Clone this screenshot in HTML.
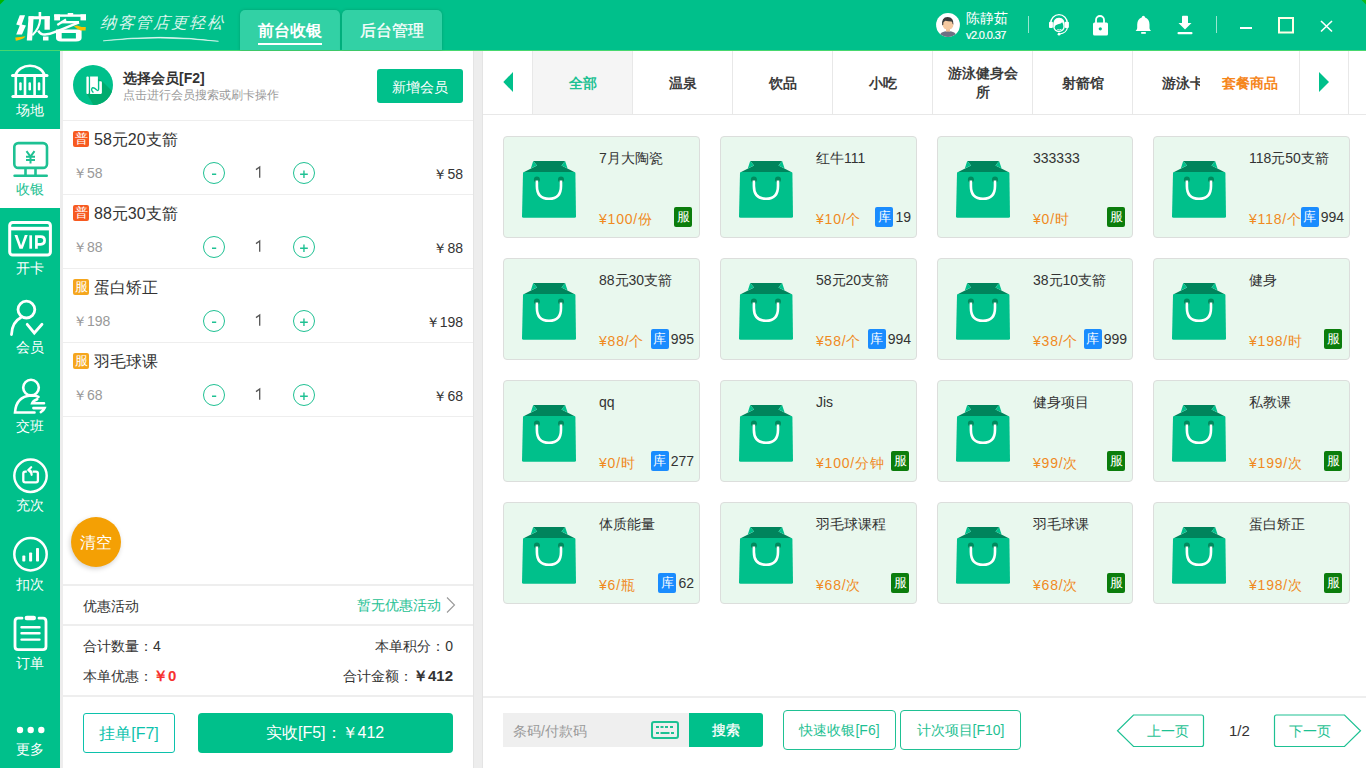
<!DOCTYPE html>
<html><head><meta charset="utf-8">
<style>
*{box-sizing:border-box;margin:0;padding:0}
html,body{width:1366px;height:768px;overflow:hidden}
body{position:relative;background:#ededed;font-family:"Liberation Sans",sans-serif;color:#333}
.a{position:absolute}
.g{background:#00c08b}
.t{white-space:nowrap;line-height:1}
/* sidebar */
.nav{position:absolute;left:0;width:60px;height:79px;text-align:center;color:#fff}
.nav svg{position:absolute;left:0;top:0}
.nav .lb{position:absolute;left:0;top:1px;width:60px;font-size:14px;line-height:14px;text-align:center}
/* items */
.row{position:absolute;left:63px;width:410px;height:74px;border-bottom:1px solid #eee;background:#fff}
.bdg{position:absolute;width:16px;height:16px;color:#fff;font-size:13px;line-height:16px;text-align:center;border-radius:2px}
.circ{position:absolute;width:22px;height:22px;border:1px solid #1fc193;border-radius:50%;color:#1fc193;font-size:12px;line-height:21px;text-align:center}
/* cards */
.card{position:absolute;width:197px;height:102px;background:#e9f8ee;border:1px solid #dcdedc;border-radius:4px}
.card svg{position:absolute;left:16px;top:22px}
.card .nm{position:absolute;left:95px;top:13px;font-size:14px;color:#333;line-height:16px;white-space:nowrap}
.card .pr{position:absolute;left:95px;top:74px;font-size:14px;color:#f08a1e;line-height:16px;white-space:nowrap;letter-spacing:0.8px}
.card .rt{position:absolute;right:5px;top:70px;height:20px;white-space:nowrap;font-size:14px;line-height:20px;color:#333}
.fu{display:inline-block;width:18px;height:20px;background:#0b7d0c;color:#fff;border-radius:2px;text-align:center;font-size:13px;line-height:20px;vertical-align:top}
.ku{display:inline-block;width:18px;height:20px;background:#1a8cfe;color:#fff;border-radius:2px;text-align:center;font-size:13px;line-height:20px;vertical-align:top;margin-right:2px}
.tab{position:absolute;top:51px;width:100px;height:63px;border-left:1px solid #e8e8e8;font-size:14px;font-weight:bold;text-align:center;color:#3c3c3c;line-height:64px;background:#fff}
.obtn{position:absolute;border:1px solid #1fc193;border-radius:4px;color:#1fc193;font-size:14px;text-align:center;background:#fff}
</style></head><body>

<!-- HEADER -->
<div class="a g" style="left:0;top:0;width:1366px;height:50px"></div>
<div class="a" style="left:0;top:50px;width:1366px;height:1px;background:#47d86f"></div>


<!-- logo -->
<svg class="a" style="left:0;top:0" width="240" height="50" viewBox="0 0 240 50">
  <g fill="#fff">
   <path d="M19.75,15.3 L25.06,15.3 L21.74,24.6 L25.95,25.5 L21.96,34.6 L16.21,34.6 L19.75,25.5 L16.21,24.6Z"/>
   <path d="M28.6,16.2 L33.7,16.2 L32.1,40.5 L26.8,40.5Z"/>
   <path d="M28.6,16.2 L49.8,16.2 L49.8,19.3 L28.6,19.3Z"/>
   <rect x="38.6" y="12" width="2.6" height="6"/>
   <rect x="44.5" y="16.2" width="5.3" height="13.5"/>
   <rect x="43" y="36.5" width="5.5" height="4"/>
  </g>
  <path d="M40.2,19 Q39.6,28.5 32.3,35.2" fill="none" stroke="#fff" stroke-width="2.1"/>
  <path d="M15.3,37.6 Q20,37 25.5,36.3 Q24,39 19,40 Q17,40.5 15.8,40.7Z" fill="#f9c000"/>
  <g fill="#fff">
   <rect x="54.2" y="14.4" width="31.8" height="2.4"/>
   <rect x="54.2" y="14.4" width="5.8" height="6"/>
   <rect x="80.5" y="14.4" width="5.5" height="6"/>
   <rect x="67.7" y="13" width="5.5" height="2"/>
   <rect x="61.3" y="21" width="17.7" height="2.4"/>
   <path d="M56,29.5 H81.6 V38 Q81.6,41.4 76,41.4 H61 Q56,41.4 56,38Z M61.7,33 V38.5 H75.9 V33Z" fill-rule="evenodd"/>
  </g>
  <path d="M57.3,25 L66,19.5" stroke="#fff" stroke-width="2.2" fill="none"/>
  <path d="M79,22.4 L55,32.1" stroke="#fff" stroke-width="2.6" fill="none"/>
  <path d="M73.9,26.2 L76.8,25.5 L81.6,27 L85.8,27 L85.6,30.4 L80.7,30.6 L76.8,28.6Z" fill="#f9c000"/>
  <path d="M38.2,30.6 Q40.5,34.8 45,34.6 Q50,34.3 56,31.7" stroke="#fff" stroke-width="2.5" fill="none"/>
  <path d="M103.2,40.8 Q160,33.5 218.5,41.3 Q160,35.2 103.2,40.8Z" fill="#fff" stroke="#fff" stroke-width="0.5"/>
</svg>
<div class="a t" style="left:100px;top:13px;font-size:16px;line-height:20px;letter-spacing:1.9px;color:#fff;font-style:italic;transform:skewX(-4deg);opacity:.85">纳客管店更轻松</div>
<!-- top tabs -->
<div class="a" style="left:240px;top:10px;width:100px;height:40px;background:#32d1a5;border-radius:5px 5px 0 0;box-shadow:0 0 3px rgba(0,90,60,.35)"></div>
<div class="a" style="left:342px;top:10px;width:100px;height:40px;background:#32d1a5;border-radius:5px 5px 0 0;box-shadow:0 0 3px rgba(0,90,60,.35)"></div>
<div class="a t" style="left:240px;top:22px;width:100px;text-align:center;font-size:16px;font-weight:bold;color:#fff;line-height:18px">前台收银</div>
<div class="a" style="left:258px;top:43px;width:64px;height:2px;background:#fff"></div>
<div class="a t" style="left:342px;top:22px;width:100px;text-align:center;font-size:16px;color:#fff;line-height:18px;-webkit-text-stroke:0.3px #fff">后台管理</div>
<!-- user -->
<svg class="a" style="left:936px;top:13px" width="24" height="24" viewBox="0 0 24 24">
  <defs><clipPath id="cc"><circle cx="12" cy="12" r="11.9"/></clipPath></defs>
  <circle cx="12" cy="12" r="11.9" fill="#fff"/>
  <g clip-path="url(#cc)">
   <path d="M2.5,25 Q3.5,18.4 12,18.1 Q20.5,18.4 21.5,25Z" fill="#6f7083"/>
   <rect x="10" y="15" width="4" height="3.6" fill="#f0bf98"/>
   <ellipse cx="12" cy="11.8" rx="5.4" ry="4.9" fill="#f5c9a0"/>
   <path d="M6.2,12.2 Q5.2,4.4 11.6,4.1 Q17.8,4.2 17.4,11.6 L16.6,11 Q16.4,8.8 15.5,8.6 Q12,8.6 9.5,7.8 Q8.2,8.6 7.4,9.6 L7.2,12Z" fill="#3b3b3b"/>
  </g>
</svg>
<div class="a t" style="left:966px;top:10px;font-size:14px;line-height:16px;color:#fff">陈静茹</div>
<div class="a t" style="left:966px;top:29px;font-size:11px;line-height:12px;color:#fff;letter-spacing:-0.6px;-webkit-text-stroke:0.2px #fff">v2.0.0.37</div>
<div class="a" style="left:1028px;top:16px;width:1px;height:17px;background:rgba(255,255,255,.6)"></div>
<div class="a" style="left:1216px;top:16px;width:1px;height:17px;background:rgba(255,255,255,.6)"></div>
<!-- header icons -->
<svg class="a" style="left:1040px;top:5px" width="326" height="40" viewBox="1040 5 326 40">
  <!-- headset -->
  <path d="M1050.6,23.5 A8.4,8.8 0 0 1 1067.4,23.5" fill="none" stroke="#fff" stroke-width="1.3"/>
  <path d="M1053.2,27 Q1052.6,17.8 1059,17.7 Q1065.4,17.8 1064.8,27 Q1064.2,31.5 1059,32.2 Q1054,31.8 1053.2,27Z" fill="#fff"/>
  <path d="M1054.6,27.2 Q1055,24.6 1058,24.2 Q1061.2,23.8 1062.2,22.2 Q1063.4,24 1063.4,26.5 Q1063.2,30.5 1059,30.9 Q1055,30.6 1054.6,27.2Z" fill="#00c08b"/>
  <path d="M1057.3,29.6 Q1059.4,30.4 1061.4,29.4" fill="none" stroke="#fff" stroke-width="0.9"/>
  <rect x="1049" y="21.8" width="3.9" height="6.3" rx="1" fill="#fff"/>
  <rect x="1064.8" y="21.8" width="4.1" height="6.3" rx="1" fill="#fff"/>
  <path d="M1067.3,28 Q1066.5,33 1059.5,34" fill="none" stroke="#fff" stroke-width="1.2"/>
  <circle cx="1059" cy="34.2" r="1.4" fill="#fff"/>
  <!-- lock -->
  <path d="M1096,23 V20 A4,4 0 0 1 1104,20 V23" fill="none" stroke="#fff" stroke-width="1.8"/>
  <rect x="1093" y="22.5" width="15" height="13" rx="1.5" fill="#fff"/>
  <circle cx="1100.3" cy="28.8" r="1.6" fill="#00c08b"/>
  <!-- bell -->
  <path d="M1143.4,15.8 Q1144.9,15.9 1145.1,17.6 Q1149.4,19.2 1149.5,24.5 V28.2 Q1149.8,29.8 1151,30.9 H1135.6 Q1136.9,29.8 1137.2,28.2 V24.5 Q1137.4,19.2 1141.7,17.6 Q1141.9,15.9 1143.4,15.8Z" fill="#fff"/>
  <rect x="1141.2" y="32" width="4.6" height="1.8" fill="#fff"/>
  <!-- download -->
  <rect x="1182" y="15.8" width="6" height="8" rx="0.8" fill="#fff"/>
  <path d="M1178.5,23 H1191.5 L1185,29.5Z" fill="#fff"/>
  <rect x="1177.5" y="32" width="15" height="2.3" rx="1" fill="#fff"/>
  <!-- minimize -->
  <rect x="1240" y="27" width="12" height="2" fill="#fff"/>
  <!-- maximize -->
  <rect x="1279" y="18" width="14" height="14.5" fill="none" stroke="#fdffe6" stroke-width="2"/>
  <!-- close -->
  <path d="M1321,21 L1332,31.5 M1332,21 L1321,31.5" stroke="#fff" stroke-width="1.6"/>
</svg>

<svg class="a" style="left:0;top:0" width="5" height="5"><path d="M0,0 H4.5 L0,4.5Z" fill="#00b400"/></svg>
<svg class="a" style="left:1361px;top:0" width="5" height="5"><path d="M0.5,0 H5 V4.5Z" fill="#12b81a"/></svg>
<!-- SIDEBAR -->
<div class="a g" style="left:0;top:51px;width:60px;height:717px"></div>
<div class="a" style="left:0;top:129px;width:60px;height:79px;background:#fff"></div>


<svg class="a" style="left:0;top:51px" width="60" height="717" viewBox="0 51 60 717">
 <g fill="none" stroke="#fff" stroke-width="2.6">
  <!-- changdi -->
  <path d="M15.5,75 A15,12.5 0 0 1 44.5,75"/>
  <path d="M15.8,76 V95 M25,76 V95 M34.6,76 V95 M43.8,76 V95"/>
 </g>
 <g fill="#fff">
  <rect x="11" y="74" width="37.5" height="3" rx="1.5"/>
  <rect x="11.4" y="95" width="36.6" height="3" rx="1.5"/>
  <rect x="19.2" y="82.3" width="2.5" height="8.2" rx="1.2"/>
  <rect x="28.5" y="82.3" width="2.5" height="8.2" rx="1.2"/>
  <rect x="37.8" y="82.3" width="2.5" height="8.2" rx="1.2"/>
 </g>
 <!-- shouyin (active) -->
 <g fill="none" stroke="#1ec193" stroke-width="2.6">
  <rect x="14.3" y="143.1" width="32.7" height="24.8" rx="4"/>
  <path d="M25.5,168 V175 M35.5,168 V175"/>
  <path d="M14.6,175.8 H46.7" stroke-linecap="round"/>
 </g>
 <g fill="none" stroke="#1ec193" stroke-width="2">
  <path d="M26.5,151.2 L30.5,156.5 L34.5,151.2 M26,156.8 H35 M26,160 H35 M30.5,156.5 V163.5"/>
 </g>
 <!-- VIP -->
 <g fill="none" stroke="#fff" stroke-width="3">
  <rect x="9.7" y="222.5" width="40.7" height="32.5" rx="3"/>
 </g>
 <rect x="11" y="226.8" width="38" height="3.6" fill="#fff"/>
 <g fill="none" stroke="#fff" stroke-width="2.7">
  <path d="M14.5,235 H17.4 L21.1,245.4 L24.8,235 H27.7 L22.7,248.7 H19.5Z" fill="#fff" stroke="none"/>
  <path d="M30.7,235.3 V248.7"/>
  <path d="M36.4,248.7 V236.6 H40.8 Q44.6,236.6 44.6,240.5 Q44.6,244.3 40.8,244.3 H36.4"/>
 </g>
 <!-- huiyuan -->
 <g fill="none" stroke="#fff" stroke-width="2.8" stroke-linecap="round">
  <circle cx="26.4" cy="309.6" r="8.4"/>
  <path d="M21,317.5 Q12,322 11.5,334.5"/>
  <path d="M27.2,324.3 L34.3,333 L42,324.3"/>
 </g>
 <!-- jiaoban -->
 <g fill="none" stroke="#fff" stroke-width="2.6" stroke-linecap="round">
  <circle cx="31" cy="387.6" r="7.8"/>
  <path d="M38.5,396.8 Q36,395.5 31,395.5 Q16,396.5 15,412.5 H34.5"/>
  <path d="M37.2,399.2 Q33,400.8 32.2,403.2 H44"/>
  <path d="M33.4,408.1 H44.6 Q43.5,410.8 40.8,412.2"/>
 </g>
 <!-- chongci -->
 <g fill="none" stroke="#fff" stroke-width="2.5">
  <circle cx="30.5" cy="475.8" r="16.2"/>
  <path d="M26.8,471.6 H25.2 Q23.3,471.6 23.3,473.5 V480.4 Q23.3,482.3 25.2,482.3 H36 Q37.9,482.3 37.9,480.4 V473.5 Q37.9,471.6 36,471.6 H32.6" stroke-width="2.3"/>
  <path d="M31.2,467.2 L28.3,470 L31.2,472.8" stroke-width="2.2" stroke-linecap="round" stroke-linejoin="round"/>
  <path d="M28.8,470 Q31.5,470.2 31.6,474.8" stroke-width="2.2" stroke-linecap="round"/>
 </g>
 <!-- kouci -->
 <circle cx="30.5" cy="554.2" r="16.2" fill="none" stroke="#fff" stroke-width="2.5"/>
 <g fill="#fff">
  <rect x="22.3" y="555.6" width="3" height="6" rx="0.8"/>
  <rect x="29.1" y="552.4" width="3" height="9.2" rx="0.8"/>
  <rect x="36" y="547.9" width="3" height="13.7" rx="0.8"/>
 </g>
 <!-- dingdan -->
 <g fill="none" stroke="#fff" stroke-width="2.8" stroke-linecap="round">
  <path d="M22,618.2 H18 Q15,618.2 15,621.5 V646.5 Q15,649.6 18,649.6 H43 Q46,649.6 46,646.5 V621.5 Q46,618.2 43,618.2 H39"/>
  <path d="M21.5,627.2 H39.5 M21.5,633.3 H39.5 M21.5,639.6 H39.5" stroke-width="2.4"/>
 </g>
 <rect x="24.6" y="615.8" width="11.4" height="4.4" rx="2.2" fill="#fff"/>
 <!-- more -->
 <circle cx="20" cy="730" r="3.2" fill="#fff"/>
 <circle cx="30.7" cy="730" r="3.2" fill="#fff"/>
 <circle cx="41.3" cy="730" r="3.2" fill="#fff"/>
</svg>
<div class="nav" style="top:102px"><div class="lb">场地</div></div>
<div class="nav" style="top:181px;color:#1ec193"><div class="lb">收银</div></div>
<div class="nav" style="top:260px"><div class="lb">开卡</div></div>
<div class="nav" style="top:339px"><div class="lb">会员</div></div>
<div class="nav" style="top:418px"><div class="lb">交班</div></div>
<div class="nav" style="top:497px"><div class="lb">充次</div></div>
<div class="nav" style="top:576px"><div class="lb">扣次</div></div>
<div class="nav" style="top:655px"><div class="lb">订单</div></div>
<div class="nav" style="top:741px"><div class="lb">更多</div></div>

<!-- LEFT PANEL -->
<div class="a" style="left:63px;top:51px;width:410px;height:717px;background:#fff"></div>


<!-- member -->
<svg class="a" style="left:73px;top:65px" width="40" height="40" viewBox="73 65 40 40">
 <defs><clipPath id="mc"><circle cx="93" cy="85" r="20"/></clipPath></defs>
 <circle cx="93" cy="85" r="20" fill="#00c08b"/>
 <path d="M97.9,79 L102,81 L125,104 L105,125 L87,94Z" fill="#00ac6e" clip-path="url(#mc)"/>
 <rect x="86.4" y="76.4" width="2.4" height="17.5" rx="1" fill="#fff"/>
 <path d="M90.1,76.4 H97.9 V81.2 H100.8 Q101.9,81.2 101.9,82.5 V92.8 Q101.9,93.9 100.8,93.9 H90.1Z" fill="#fff"/>
 <path d="M98.6,81 V89.3 Q98.4,91.2 96.8,90 L94.8,88.4 Q92.2,86.6 91.6,89.4 Q91.5,91.2 93.4,92.6" fill="none" stroke="#00c08b" stroke-width="1.4"/>
</svg>
<div class="a t" style="left:123px;top:70px;font-size:14px;font-weight:bold;color:#333;line-height:16px">选择会员[F2]</div>
<div class="a t" style="left:123px;top:88px;font-size:12px;color:#999;line-height:14px">点击进行会员搜索或刷卡操作</div>
<div class="a" style="left:377px;top:69px;width:86px;height:34px;background:#00c08b;border-radius:3px;color:#fff;font-size:14px;line-height:36px;text-align:center">新增会员</div>
<div class="a" style="left:63px;top:120px;width:410px;height:1px;background:#eee"></div>
<div class="bdg" style="left:73px;top:131px;background:#f75a20">普</div>
<div class="a t" style="left:94px;top:131px;font-size:16px;line-height:17px;color:#333">58元20支箭</div>
<div class="a t" style="left:73px;top:165px;font-size:14px;line-height:16px;color:#999">￥58</div>
<div class="circ" style="left:203px;top:162px"></div>

<div class="circ" style="left:293px;top:162px"></div>
<svg class="a" style="left:200px;top:161px" width="120" height="26" viewBox="200 161 120 26"><path d="M212,174.3 H216.2 M300.1,174.3 H307.8 M303.95,170.5 V178.1" stroke="#1fc193" stroke-width="1.4" fill="none"/><path d="M256,169.6 L259.7,167.0 V177.7" stroke="#555" stroke-width="1.3" fill="none"/></svg>
<div class="a t" style="left:363px;top:166px;width:100px;text-align:right;font-size:14px;line-height:16px;color:#333">￥58</div>
<div class="a" style="left:63px;top:194px;width:410px;height:1px;background:#eee"></div>
<div class="bdg" style="left:73px;top:205px;background:#f75a20">普</div>
<div class="a t" style="left:94px;top:205px;font-size:16px;line-height:17px;color:#333">88元30支箭</div>
<div class="a t" style="left:73px;top:239px;font-size:14px;line-height:16px;color:#999">￥88</div>
<div class="circ" style="left:203px;top:236px"></div>

<div class="circ" style="left:293px;top:236px"></div>
<svg class="a" style="left:200px;top:235px" width="120" height="26" viewBox="200 235 120 26"><path d="M212,248.3 H216.2 M300.1,248.3 H307.8 M303.95,244.5 V252.1" stroke="#1fc193" stroke-width="1.4" fill="none"/><path d="M256,243.6 L259.7,241.0 V251.7" stroke="#555" stroke-width="1.3" fill="none"/></svg>
<div class="a t" style="left:363px;top:240px;width:100px;text-align:right;font-size:14px;line-height:16px;color:#333">￥88</div>
<div class="a" style="left:63px;top:268px;width:410px;height:1px;background:#eee"></div>
<div class="bdg" style="left:73px;top:279px;background:#f5a61e">服</div>
<div class="a t" style="left:94px;top:279px;font-size:16px;line-height:17px;color:#333">蛋白矫正</div>
<div class="a t" style="left:73px;top:313px;font-size:14px;line-height:16px;color:#999">￥198</div>
<div class="circ" style="left:203px;top:310px"></div>

<div class="circ" style="left:293px;top:310px"></div>
<svg class="a" style="left:200px;top:309px" width="120" height="26" viewBox="200 309 120 26"><path d="M212,322.3 H216.2 M300.1,322.3 H307.8 M303.95,318.5 V326.1" stroke="#1fc193" stroke-width="1.4" fill="none"/><path d="M256,317.6 L259.7,315.0 V325.7" stroke="#555" stroke-width="1.3" fill="none"/></svg>
<div class="a t" style="left:363px;top:314px;width:100px;text-align:right;font-size:14px;line-height:16px;color:#333">￥198</div>
<div class="a" style="left:63px;top:342px;width:410px;height:1px;background:#eee"></div>
<div class="bdg" style="left:73px;top:353px;background:#f5a61e">服</div>
<div class="a t" style="left:94px;top:353px;font-size:16px;line-height:17px;color:#333">羽毛球课</div>
<div class="a t" style="left:73px;top:387px;font-size:14px;line-height:16px;color:#999">￥68</div>
<div class="circ" style="left:203px;top:384px"></div>

<div class="circ" style="left:293px;top:384px"></div>
<svg class="a" style="left:200px;top:383px" width="120" height="26" viewBox="200 383 120 26"><path d="M212,396.3 H216.2 M300.1,396.3 H307.8 M303.95,392.5 V400.1" stroke="#1fc193" stroke-width="1.4" fill="none"/><path d="M256,391.6 L259.7,389.0 V399.7" stroke="#555" stroke-width="1.3" fill="none"/></svg>
<div class="a t" style="left:363px;top:388px;width:100px;text-align:right;font-size:14px;line-height:16px;color:#333">￥68</div>
<div class="a" style="left:63px;top:416px;width:410px;height:1px;background:#eee"></div>

<!-- clear -->
<div class="a" style="left:71px;top:517px;width:50px;height:50px;border-radius:50%;background:#f4a004;box-shadow:-1px 2px 5px rgba(0,0,0,.18);color:#fff;font-size:16px;line-height:52px;text-align:center">清空</div>
<div class="a" style="left:63px;top:584px;width:410px;height:2px;background:#eee"></div>
<div class="a t" style="left:83px;top:598px;font-size:14px;line-height:16px;color:#333">优惠活动</div>
<div class="a t" style="left:357px;top:598px;font-size:14px;line-height:15px;color:#1ec193">暂无优惠活动</div>
<svg class="a" style="left:445px;top:596px" width="12" height="18" viewBox="0 0 12 18"><path d="M2,1.5 L9.5,9 L2,16.5" fill="none" stroke="#999" stroke-width="1.1"/></svg>
<div class="a" style="left:63px;top:624px;width:410px;height:2px;background:#eee"></div>
<div class="a t" style="left:83px;top:638px;font-size:14px;line-height:16px;color:#333">合计数量：4</div>
<div class="a t" style="left:253px;top:638px;width:200px;text-align:right;font-size:14px;line-height:16px;color:#333">本单积分：0</div>
<div class="a t" style="left:83px;top:668px;font-size:14px;line-height:16px;color:#333">本单优惠：<b style="color:#f7322f;font-size:15px">￥0</b></div>
<div class="a t" style="left:253px;top:668px;width:200px;text-align:right;font-size:14px;line-height:16px;color:#333">合计金额：<b style="font-size:15px;color:#333">￥412</b></div>
<div class="a" style="left:63px;top:695px;width:410px;height:2px;background:#eee"></div>
<div class="a" style="left:83px;top:713px;width:92px;height:40px;border:1px solid #0cc2ac;border-radius:3px;color:#0cc2ac;font-size:16px;line-height:40px;text-align:center">挂单[F7]</div>
<div class="a" style="left:198px;top:713px;width:255px;height:40px;background:#00c08b;border-radius:4px;color:#fff;font-size:16px;line-height:40px;padding-left:68px;white-space:nowrap">实收[F5]：￥412</div>

<div class="a" style="left:473px;top:51px;width:1px;height:717px;background:#e4e4e4"></div>
<div class="a" style="left:482px;top:51px;width:1px;height:717px;background:#e4e4e4"></div>
<!-- RIGHT PANEL -->
<div class="a" style="left:483px;top:51px;width:883px;height:717px;background:#fff"></div>


<!-- tabs -->
<svg class="a" style="left:503px;top:72px" width="11" height="20" viewBox="0 0 11 20"><path d="M10,0 V20 L0.3,10Z" fill="#00c08b"/></svg>
<div class="tab" style="left:532px;background:#f5f5f5;color:#1ec193">全部</div>
<div class="tab" style="left:632px">温泉</div>
<div class="tab" style="left:732px">饮品</div>
<div class="tab" style="left:832px">小吃</div>
<div class="tab" style="left:932px;line-height:19px;padding-top:13px">游泳健身会<br>所</div>
<div class="tab" style="left:1032px">射箭馆</div>
<div class="a" style="left:1132px;top:51px;width:68px;height:63px;overflow:hidden"><div class="tab" style="left:0;top:0">游泳卡</div></div>
<div class="a t" style="left:1200px;top:75px;width:100px;text-align:center;font-size:14px;font-weight:bold;color:#f5861c;line-height:16px">套餐商品</div>
<div class="a" style="left:1299px;top:51px;width:1px;height:63px;background:#e8e8e8"></div>
<svg class="a" style="left:1318px;top:72px" width="12" height="20" viewBox="0 0 12 20"><path d="M1,0 V20 L11,10Z" fill="#00c08b"/></svg>
<div class="a" style="left:1348px;top:51px;width:1px;height:63px;background:#e8e8e8"></div>
<div class="a" style="left:483px;top:114px;width:883px;height:1px;background:#e8e8e8"></div>
<div class="card" style="left:503px;top:136px"><svg width="56" height="60" viewBox="5 4 56 60"><path d="M9.1,16.9 H59.3 Q60.3,16.9 60.4,18 L61,61.2 Q61,62.7 59.5,62.7 H8.5 Q7,62.7 7,61.2 L8,18 Q8.1,16.9 9.1,16.9Z" fill="#00c08b"/><path d="M18.2,5.9 H50.1 L46.5,10.5 L59.3,16.9 H9.1 L22,10.5Z" fill="#00845c"/><path d="M18.2,5.9 L22,10.5 L15.8,13.6Z M50.1,5.9 L46.5,10.5 L52.6,13.6Z" fill="#00c08b"/><circle cx="21.9" cy="24.6" r="3" fill="#008a5e"/><circle cx="46" cy="24.6" r="3" fill="#008a5e"/><path d="M21.9,25.5 V31 Q21.9,43.8 34,43.8 Q46,43.8 46,31 V25.5" fill="none" stroke="#fff" stroke-width="2.6"/></svg><div class="nm">7月大陶瓷</div><div class="pr">¥100/份</div><div class="rt" style="right:7px"><span class="fu">服</span></div></div>
<div class="card" style="left:720px;top:136px"><svg width="56" height="60" viewBox="5 4 56 60"><path d="M9.1,16.9 H59.3 Q60.3,16.9 60.4,18 L61,61.2 Q61,62.7 59.5,62.7 H8.5 Q7,62.7 7,61.2 L8,18 Q8.1,16.9 9.1,16.9Z" fill="#00c08b"/><path d="M18.2,5.9 H50.1 L46.5,10.5 L59.3,16.9 H9.1 L22,10.5Z" fill="#00845c"/><path d="M18.2,5.9 L22,10.5 L15.8,13.6Z M50.1,5.9 L46.5,10.5 L52.6,13.6Z" fill="#00c08b"/><circle cx="21.9" cy="24.6" r="3" fill="#008a5e"/><circle cx="46" cy="24.6" r="3" fill="#008a5e"/><path d="M21.9,25.5 V31 Q21.9,43.8 34,43.8 Q46,43.8 46,31 V25.5" fill="none" stroke="#fff" stroke-width="2.6"/></svg><div class="nm">红牛111</div><div class="pr">¥10/个</div><div class="rt"><span class="ku">库</span>19</div></div>
<div class="card" style="left:937px;top:136px;width:196px"><svg width="56" height="60" viewBox="5 4 56 60"><path d="M9.1,16.9 H59.3 Q60.3,16.9 60.4,18 L61,61.2 Q61,62.7 59.5,62.7 H8.5 Q7,62.7 7,61.2 L8,18 Q8.1,16.9 9.1,16.9Z" fill="#00c08b"/><path d="M18.2,5.9 H50.1 L46.5,10.5 L59.3,16.9 H9.1 L22,10.5Z" fill="#00845c"/><path d="M18.2,5.9 L22,10.5 L15.8,13.6Z M50.1,5.9 L46.5,10.5 L52.6,13.6Z" fill="#00c08b"/><circle cx="21.9" cy="24.6" r="3" fill="#008a5e"/><circle cx="46" cy="24.6" r="3" fill="#008a5e"/><path d="M21.9,25.5 V31 Q21.9,43.8 34,43.8 Q46,43.8 46,31 V25.5" fill="none" stroke="#fff" stroke-width="2.6"/></svg><div class="nm">333333</div><div class="pr">¥0/时</div><div class="rt" style="right:7px"><span class="fu">服</span></div></div>
<div class="card" style="left:1153px;top:136px"><svg width="56" height="60" viewBox="5 4 56 60"><path d="M9.1,16.9 H59.3 Q60.3,16.9 60.4,18 L61,61.2 Q61,62.7 59.5,62.7 H8.5 Q7,62.7 7,61.2 L8,18 Q8.1,16.9 9.1,16.9Z" fill="#00c08b"/><path d="M18.2,5.9 H50.1 L46.5,10.5 L59.3,16.9 H9.1 L22,10.5Z" fill="#00845c"/><path d="M18.2,5.9 L22,10.5 L15.8,13.6Z M50.1,5.9 L46.5,10.5 L52.6,13.6Z" fill="#00c08b"/><circle cx="21.9" cy="24.6" r="3" fill="#008a5e"/><circle cx="46" cy="24.6" r="3" fill="#008a5e"/><path d="M21.9,25.5 V31 Q21.9,43.8 34,43.8 Q46,43.8 46,31 V25.5" fill="none" stroke="#fff" stroke-width="2.6"/></svg><div class="nm">118元50支箭</div><div class="pr">¥118/个</div><div class="rt"><span class="ku">库</span>994</div></div>
<div class="card" style="left:503px;top:258px"><svg width="56" height="60" viewBox="5 4 56 60"><path d="M9.1,16.9 H59.3 Q60.3,16.9 60.4,18 L61,61.2 Q61,62.7 59.5,62.7 H8.5 Q7,62.7 7,61.2 L8,18 Q8.1,16.9 9.1,16.9Z" fill="#00c08b"/><path d="M18.2,5.9 H50.1 L46.5,10.5 L59.3,16.9 H9.1 L22,10.5Z" fill="#00845c"/><path d="M18.2,5.9 L22,10.5 L15.8,13.6Z M50.1,5.9 L46.5,10.5 L52.6,13.6Z" fill="#00c08b"/><circle cx="21.9" cy="24.6" r="3" fill="#008a5e"/><circle cx="46" cy="24.6" r="3" fill="#008a5e"/><path d="M21.9,25.5 V31 Q21.9,43.8 34,43.8 Q46,43.8 46,31 V25.5" fill="none" stroke="#fff" stroke-width="2.6"/></svg><div class="nm">88元30支箭</div><div class="pr">¥88/个</div><div class="rt"><span class="ku">库</span>995</div></div>
<div class="card" style="left:720px;top:258px"><svg width="56" height="60" viewBox="5 4 56 60"><path d="M9.1,16.9 H59.3 Q60.3,16.9 60.4,18 L61,61.2 Q61,62.7 59.5,62.7 H8.5 Q7,62.7 7,61.2 L8,18 Q8.1,16.9 9.1,16.9Z" fill="#00c08b"/><path d="M18.2,5.9 H50.1 L46.5,10.5 L59.3,16.9 H9.1 L22,10.5Z" fill="#00845c"/><path d="M18.2,5.9 L22,10.5 L15.8,13.6Z M50.1,5.9 L46.5,10.5 L52.6,13.6Z" fill="#00c08b"/><circle cx="21.9" cy="24.6" r="3" fill="#008a5e"/><circle cx="46" cy="24.6" r="3" fill="#008a5e"/><path d="M21.9,25.5 V31 Q21.9,43.8 34,43.8 Q46,43.8 46,31 V25.5" fill="none" stroke="#fff" stroke-width="2.6"/></svg><div class="nm">58元20支箭</div><div class="pr">¥58/个</div><div class="rt"><span class="ku">库</span>994</div></div>
<div class="card" style="left:937px;top:258px;width:196px"><svg width="56" height="60" viewBox="5 4 56 60"><path d="M9.1,16.9 H59.3 Q60.3,16.9 60.4,18 L61,61.2 Q61,62.7 59.5,62.7 H8.5 Q7,62.7 7,61.2 L8,18 Q8.1,16.9 9.1,16.9Z" fill="#00c08b"/><path d="M18.2,5.9 H50.1 L46.5,10.5 L59.3,16.9 H9.1 L22,10.5Z" fill="#00845c"/><path d="M18.2,5.9 L22,10.5 L15.8,13.6Z M50.1,5.9 L46.5,10.5 L52.6,13.6Z" fill="#00c08b"/><circle cx="21.9" cy="24.6" r="3" fill="#008a5e"/><circle cx="46" cy="24.6" r="3" fill="#008a5e"/><path d="M21.9,25.5 V31 Q21.9,43.8 34,43.8 Q46,43.8 46,31 V25.5" fill="none" stroke="#fff" stroke-width="2.6"/></svg><div class="nm">38元10支箭</div><div class="pr">¥38/个</div><div class="rt"><span class="ku">库</span>999</div></div>
<div class="card" style="left:1153px;top:258px"><svg width="56" height="60" viewBox="5 4 56 60"><path d="M9.1,16.9 H59.3 Q60.3,16.9 60.4,18 L61,61.2 Q61,62.7 59.5,62.7 H8.5 Q7,62.7 7,61.2 L8,18 Q8.1,16.9 9.1,16.9Z" fill="#00c08b"/><path d="M18.2,5.9 H50.1 L46.5,10.5 L59.3,16.9 H9.1 L22,10.5Z" fill="#00845c"/><path d="M18.2,5.9 L22,10.5 L15.8,13.6Z M50.1,5.9 L46.5,10.5 L52.6,13.6Z" fill="#00c08b"/><circle cx="21.9" cy="24.6" r="3" fill="#008a5e"/><circle cx="46" cy="24.6" r="3" fill="#008a5e"/><path d="M21.9,25.5 V31 Q21.9,43.8 34,43.8 Q46,43.8 46,31 V25.5" fill="none" stroke="#fff" stroke-width="2.6"/></svg><div class="nm">健身</div><div class="pr">¥198/时</div><div class="rt" style="right:7px"><span class="fu">服</span></div></div>
<div class="card" style="left:503px;top:380px"><svg width="56" height="60" viewBox="5 4 56 60"><path d="M9.1,16.9 H59.3 Q60.3,16.9 60.4,18 L61,61.2 Q61,62.7 59.5,62.7 H8.5 Q7,62.7 7,61.2 L8,18 Q8.1,16.9 9.1,16.9Z" fill="#00c08b"/><path d="M18.2,5.9 H50.1 L46.5,10.5 L59.3,16.9 H9.1 L22,10.5Z" fill="#00845c"/><path d="M18.2,5.9 L22,10.5 L15.8,13.6Z M50.1,5.9 L46.5,10.5 L52.6,13.6Z" fill="#00c08b"/><circle cx="21.9" cy="24.6" r="3" fill="#008a5e"/><circle cx="46" cy="24.6" r="3" fill="#008a5e"/><path d="M21.9,25.5 V31 Q21.9,43.8 34,43.8 Q46,43.8 46,31 V25.5" fill="none" stroke="#fff" stroke-width="2.6"/></svg><div class="nm">qq</div><div class="pr">¥0/时</div><div class="rt"><span class="ku">库</span>277</div></div>
<div class="card" style="left:720px;top:380px"><svg width="56" height="60" viewBox="5 4 56 60"><path d="M9.1,16.9 H59.3 Q60.3,16.9 60.4,18 L61,61.2 Q61,62.7 59.5,62.7 H8.5 Q7,62.7 7,61.2 L8,18 Q8.1,16.9 9.1,16.9Z" fill="#00c08b"/><path d="M18.2,5.9 H50.1 L46.5,10.5 L59.3,16.9 H9.1 L22,10.5Z" fill="#00845c"/><path d="M18.2,5.9 L22,10.5 L15.8,13.6Z M50.1,5.9 L46.5,10.5 L52.6,13.6Z" fill="#00c08b"/><circle cx="21.9" cy="24.6" r="3" fill="#008a5e"/><circle cx="46" cy="24.6" r="3" fill="#008a5e"/><path d="M21.9,25.5 V31 Q21.9,43.8 34,43.8 Q46,43.8 46,31 V25.5" fill="none" stroke="#fff" stroke-width="2.6"/></svg><div class="nm">Jis</div><div class="pr">¥100/分钟</div><div class="rt" style="right:7px"><span class="fu">服</span></div></div>
<div class="card" style="left:937px;top:380px;width:196px"><svg width="56" height="60" viewBox="5 4 56 60"><path d="M9.1,16.9 H59.3 Q60.3,16.9 60.4,18 L61,61.2 Q61,62.7 59.5,62.7 H8.5 Q7,62.7 7,61.2 L8,18 Q8.1,16.9 9.1,16.9Z" fill="#00c08b"/><path d="M18.2,5.9 H50.1 L46.5,10.5 L59.3,16.9 H9.1 L22,10.5Z" fill="#00845c"/><path d="M18.2,5.9 L22,10.5 L15.8,13.6Z M50.1,5.9 L46.5,10.5 L52.6,13.6Z" fill="#00c08b"/><circle cx="21.9" cy="24.6" r="3" fill="#008a5e"/><circle cx="46" cy="24.6" r="3" fill="#008a5e"/><path d="M21.9,25.5 V31 Q21.9,43.8 34,43.8 Q46,43.8 46,31 V25.5" fill="none" stroke="#fff" stroke-width="2.6"/></svg><div class="nm">健身项目</div><div class="pr">¥99/次</div><div class="rt" style="right:7px"><span class="fu">服</span></div></div>
<div class="card" style="left:1153px;top:380px"><svg width="56" height="60" viewBox="5 4 56 60"><path d="M9.1,16.9 H59.3 Q60.3,16.9 60.4,18 L61,61.2 Q61,62.7 59.5,62.7 H8.5 Q7,62.7 7,61.2 L8,18 Q8.1,16.9 9.1,16.9Z" fill="#00c08b"/><path d="M18.2,5.9 H50.1 L46.5,10.5 L59.3,16.9 H9.1 L22,10.5Z" fill="#00845c"/><path d="M18.2,5.9 L22,10.5 L15.8,13.6Z M50.1,5.9 L46.5,10.5 L52.6,13.6Z" fill="#00c08b"/><circle cx="21.9" cy="24.6" r="3" fill="#008a5e"/><circle cx="46" cy="24.6" r="3" fill="#008a5e"/><path d="M21.9,25.5 V31 Q21.9,43.8 34,43.8 Q46,43.8 46,31 V25.5" fill="none" stroke="#fff" stroke-width="2.6"/></svg><div class="nm">私教课</div><div class="pr">¥199/次</div><div class="rt" style="right:7px"><span class="fu">服</span></div></div>
<div class="card" style="left:503px;top:502px"><svg width="56" height="60" viewBox="5 4 56 60"><path d="M9.1,16.9 H59.3 Q60.3,16.9 60.4,18 L61,61.2 Q61,62.7 59.5,62.7 H8.5 Q7,62.7 7,61.2 L8,18 Q8.1,16.9 9.1,16.9Z" fill="#00c08b"/><path d="M18.2,5.9 H50.1 L46.5,10.5 L59.3,16.9 H9.1 L22,10.5Z" fill="#00845c"/><path d="M18.2,5.9 L22,10.5 L15.8,13.6Z M50.1,5.9 L46.5,10.5 L52.6,13.6Z" fill="#00c08b"/><circle cx="21.9" cy="24.6" r="3" fill="#008a5e"/><circle cx="46" cy="24.6" r="3" fill="#008a5e"/><path d="M21.9,25.5 V31 Q21.9,43.8 34,43.8 Q46,43.8 46,31 V25.5" fill="none" stroke="#fff" stroke-width="2.6"/></svg><div class="nm">体质能量</div><div class="pr">¥6/瓶</div><div class="rt"><span class="ku">库</span>62</div></div>
<div class="card" style="left:720px;top:502px"><svg width="56" height="60" viewBox="5 4 56 60"><path d="M9.1,16.9 H59.3 Q60.3,16.9 60.4,18 L61,61.2 Q61,62.7 59.5,62.7 H8.5 Q7,62.7 7,61.2 L8,18 Q8.1,16.9 9.1,16.9Z" fill="#00c08b"/><path d="M18.2,5.9 H50.1 L46.5,10.5 L59.3,16.9 H9.1 L22,10.5Z" fill="#00845c"/><path d="M18.2,5.9 L22,10.5 L15.8,13.6Z M50.1,5.9 L46.5,10.5 L52.6,13.6Z" fill="#00c08b"/><circle cx="21.9" cy="24.6" r="3" fill="#008a5e"/><circle cx="46" cy="24.6" r="3" fill="#008a5e"/><path d="M21.9,25.5 V31 Q21.9,43.8 34,43.8 Q46,43.8 46,31 V25.5" fill="none" stroke="#fff" stroke-width="2.6"/></svg><div class="nm">羽毛球课程</div><div class="pr">¥68/次</div><div class="rt" style="right:7px"><span class="fu">服</span></div></div>
<div class="card" style="left:937px;top:502px;width:196px"><svg width="56" height="60" viewBox="5 4 56 60"><path d="M9.1,16.9 H59.3 Q60.3,16.9 60.4,18 L61,61.2 Q61,62.7 59.5,62.7 H8.5 Q7,62.7 7,61.2 L8,18 Q8.1,16.9 9.1,16.9Z" fill="#00c08b"/><path d="M18.2,5.9 H50.1 L46.5,10.5 L59.3,16.9 H9.1 L22,10.5Z" fill="#00845c"/><path d="M18.2,5.9 L22,10.5 L15.8,13.6Z M50.1,5.9 L46.5,10.5 L52.6,13.6Z" fill="#00c08b"/><circle cx="21.9" cy="24.6" r="3" fill="#008a5e"/><circle cx="46" cy="24.6" r="3" fill="#008a5e"/><path d="M21.9,25.5 V31 Q21.9,43.8 34,43.8 Q46,43.8 46,31 V25.5" fill="none" stroke="#fff" stroke-width="2.6"/></svg><div class="nm">羽毛球课</div><div class="pr">¥68/次</div><div class="rt" style="right:7px"><span class="fu">服</span></div></div>
<div class="card" style="left:1153px;top:502px"><svg width="56" height="60" viewBox="5 4 56 60"><path d="M9.1,16.9 H59.3 Q60.3,16.9 60.4,18 L61,61.2 Q61,62.7 59.5,62.7 H8.5 Q7,62.7 7,61.2 L8,18 Q8.1,16.9 9.1,16.9Z" fill="#00c08b"/><path d="M18.2,5.9 H50.1 L46.5,10.5 L59.3,16.9 H9.1 L22,10.5Z" fill="#00845c"/><path d="M18.2,5.9 L22,10.5 L15.8,13.6Z M50.1,5.9 L46.5,10.5 L52.6,13.6Z" fill="#00c08b"/><circle cx="21.9" cy="24.6" r="3" fill="#008a5e"/><circle cx="46" cy="24.6" r="3" fill="#008a5e"/><path d="M21.9,25.5 V31 Q21.9,43.8 34,43.8 Q46,43.8 46,31 V25.5" fill="none" stroke="#fff" stroke-width="2.6"/></svg><div class="nm">蛋白矫正</div><div class="pr">¥198/次</div><div class="rt" style="right:7px"><span class="fu">服</span></div></div>

<!-- bottom bar -->
<div class="a" style="left:483px;top:696px;width:883px;height:2px;background:#eee"></div>
<div class="a" style="left:503px;top:713px;width:186px;height:34px;background:#efefef"></div>
<div class="a t" style="left:513px;top:723px;font-size:14px;line-height:16px;color:#999">条码/付款码</div>
<svg class="a" style="left:651px;top:721px" width="28" height="18" viewBox="0 0 28 18">
 <rect x="1" y="1" width="26" height="16" rx="2" fill="none" stroke="#1ec193" stroke-width="2"/>
 <g fill="#1ec193"><rect x="5" y="5" width="3" height="2"/><rect x="9.5" y="5" width="3" height="2"/><rect x="14" y="5" width="3" height="2"/><rect x="19" y="5" width="3" height="2"/><rect x="5" y="11" width="3" height="2"/><rect x="9.5" y="11" width="9" height="2"/><rect x="20" y="11" width="3" height="2"/></g>
</svg>
<div class="a" style="left:689px;top:713px;width:74px;height:34px;background:#00c08b;border-radius:0 3px 3px 0;color:#fff;font-size:14px;line-height:34px;text-align:center;-webkit-text-stroke:0.3px #fff">搜索</div>
<div class="obtn" style="left:783px;top:710px;width:113px;height:40px;line-height:38px">快速收银[F6]</div>
<div class="obtn" style="left:900px;top:710px;width:121px;height:40px;line-height:38px">计次项目[F10]</div>
<svg class="a" style="left:1116px;top:714px" width="246" height="34" viewBox="1116 714 246 34">
 <path d="M1133.5,715 H1201.5 Q1203.5,715 1203.5,717 V744.5 Q1203.5,746.5 1201.5,746.5 H1133.5 L1117.5,730.8Z" fill="none" stroke="#1ec193" stroke-width="1.2"/>
 <path d="M1344.5,715 H1276.5 Q1274.5,715 1274.5,717 V744.5 Q1274.5,746.5 1276.5,746.5 H1344.5 L1360.5,730.8Z" fill="none" stroke="#1ec193" stroke-width="1.2"/>
</svg>
<div class="a t" style="left:1147px;top:723px;font-size:14px;line-height:16px;color:#1ec193">上一页</div>
<div class="a t" style="left:1229px;top:722px;font-size:15px;line-height:17px;color:#333">1/2</div>
<div class="a t" style="left:1289px;top:723px;font-size:14px;line-height:16px;color:#1ec193">下一页</div>

</body></html>
